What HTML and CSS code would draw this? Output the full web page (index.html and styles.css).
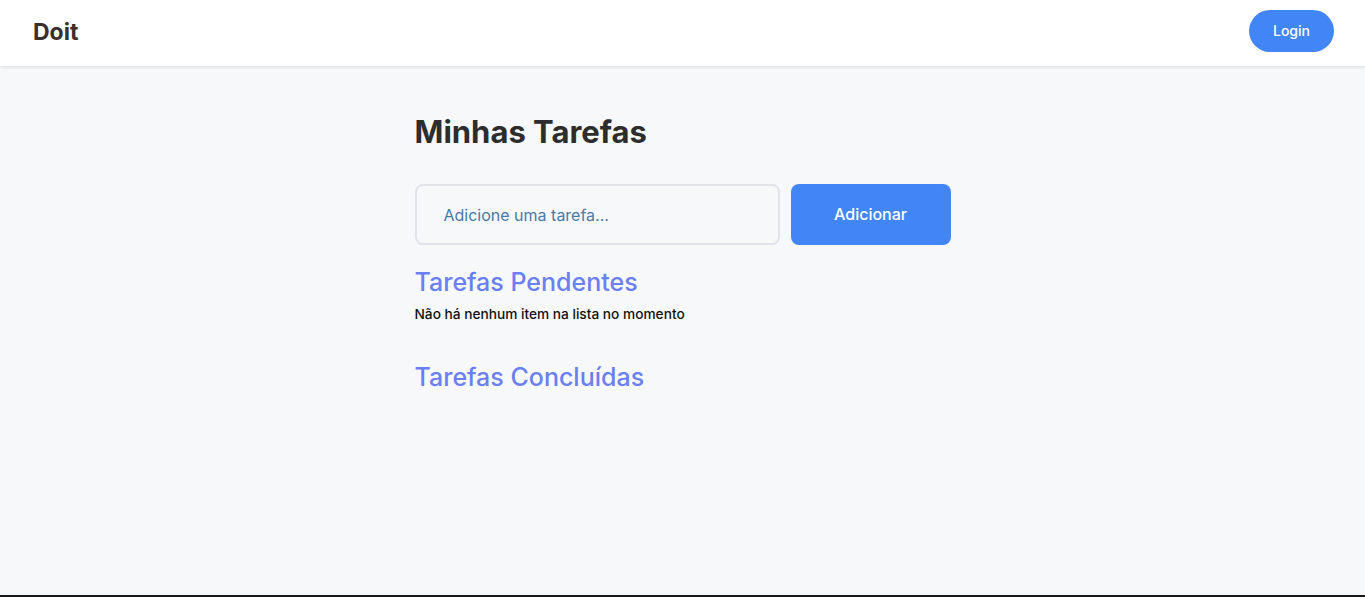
FILE: index.html
```html
<!DOCTYPE html>
<html lang="pt-BR">
<head>
<meta charset="utf-8">
<title>Doit</title>
<link rel="stylesheet" href="styles.css">
</head>
<body>
<header class="topbar">
  <div class="brand">Doit</div>
  <button class="login">Login</button>
</header>
<main class="content">
  <h1 class="title">Minhas Tarefas</h1>
  <form class="add-form">
    <input class="task-input" type="text" placeholder="Adicione uma tarefa...">
    <button class="add-btn" type="button">Adicionar</button>
  </form>
  <h2 class="section-title">Tarefas Pendentes</h2>
  <p class="empty">Não há nenhum item na lista no momento</p>
  <h2 class="section-title done">Tarefas Concluídas</h2>
</main>
<div class="bottom-strip"></div>
</body>
</html>
```
FILE: styles.css
```css
* { box-sizing: border-box; }
html, body { height: 100%; }
body {
  margin: 0;
  background: #f7f8fa;
  font-family: Inter, "Noto Sans", "Liberation Sans", sans-serif;
  display: flex;
  flex-direction: column;
  overflow: hidden;
}
.topbar {
  height: 66px;
  background: #ffffff;
  box-shadow: 0 1px 4px rgba(0,0,0,0.12);
  display: flex;
  align-items: center;
  justify-content: space-between;
  padding: 0 31px 0 33px;
  flex-shrink: 0;
}
.brand {
  font-size: 23px;
  font-weight: 700;
  color: #3a2f2c;
  margin-bottom: 2px;
}
.login {
  width: 85px;
  height: 42px;
  border: none;
  border-radius: 21px;
  background: #4286f5;
  color: #ffffff;
  font-family: inherit;
  font-size: 14px;
  font-weight: 500;
  margin-bottom: 5px;
  padding-bottom: 1px;
}
.content {
  width: 536px;
  margin: 0 auto;
  padding-top: 48px;
  flex: 1;
}
.title {
  margin: 0;
  font-size: 31px;
  font-weight: 700;
  color: #2d2d2d;
  line-height: 36px;
}
.add-form {
  display: flex;
  gap: 11px;
  margin-top: 34px;
}
.task-input {
  width: 365px;
  height: 61px;
  border: 2px solid #e1e3e8;
  border-radius: 8px;
  background: #f7f8fa;
  padding: 0 27px;
  font-family: inherit;
  font-size: 16px;
  color: #333;
  outline: none;
}
.task-input::placeholder { color: #4a7aa3; }
.add-btn {
  width: 160px;
  height: 61px;
  border: none;
  border-radius: 8px;
  background: #4286f5;
  color: #ffffff;
  font-family: inherit;
  font-size: 16px;
  font-weight: 500;
  padding-bottom: 2px;
}
.section-title {
  margin: 22px 0 0;
  font-size: 25px;
  font-weight: 500;
  color: #6a7ff0;
  line-height: 30px;
}
.empty {
  margin: 9px 0 0;
  font-size: 13.7px;
  font-weight: 500;
  color: #111;
}
.section-title.done {
  margin-top: 40px;
}
.bottom-strip {
  height: 2px;
  background: #14161c;
  flex-shrink: 0;
}
```
